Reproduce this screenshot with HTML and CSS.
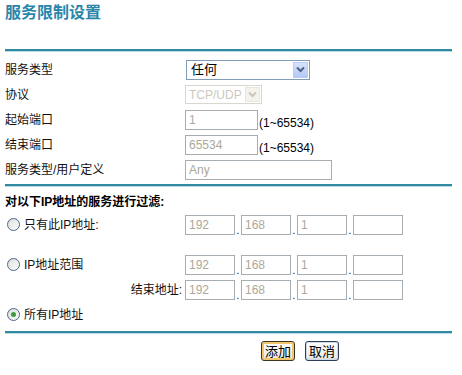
FILE: index.html
```html
<!DOCTYPE html>
<html lang="zh-CN">
<head>
    <meta charset="UTF-8">
    <title>服务限制设置</title>
    <link rel="stylesheet" href="styles.css">
</head>
<body>
<div class="page">
    <h1 class="title">服务限制设置</h1>
    <div class="rule rule-top"></div>

    <!-- 服务设置 -->
    <div class="rows">
        <div class="row">
            <span class="label">服务类型</span>
            <span class="select-box sel-type">
                <select><option>任何</option></select>
                <span class="drop">
                    <svg width="9" height="7" viewBox="0 0 9 7"><path d="M1 1.5 L4.5 5 L8 1.5" fill="none" stroke="#4d6185" stroke-width="2"/></svg>
                </span>
            </span>
        </div>
        <div class="row">
            <span class="label">协议</span>
            <span class="select-box sel-proto disabled">
                <select disabled><option>TCP/UDP</option></select>
                <span class="drop">
                    <svg width="9" height="7" viewBox="0 0 9 7"><path d="M1 1.5 L4.5 5 L8 1.5" fill="none" stroke="#c9c7ba" stroke-width="2"/></svg>
                </span>
            </span>
        </div>
        <div class="row">
            <span class="label">起始端口</span>
            <span class="field"><input class="txt port" type="text" value="1" disabled><span class="hint">(1~65534)</span></span>
        </div>
        <div class="row">
            <span class="label">结束端口</span>
            <span class="field"><input class="txt port" type="text" value="65534" disabled><span class="hint">(1~65534)</span></span>
        </div>
        <div class="row">
            <span class="label">服务类型/用户定义</span>
            <span class="field"><input class="txt custom" type="text" value="Any" disabled></span>
        </div>
    </div>

    <div class="rule rule-mid"></div>

    <!-- IP 过滤 -->
    <div class="section-head">对以下IP地址的服务进行过滤:</div>
    <div class="row">
        <label class="label radio-label"><input type="radio" name="ipmode">只有此IP地址:</label>
        <span class="ip">
            <input class="txt oct" type="text" value="192" disabled><span class="dot">.</span><input class="txt oct" type="text" value="168" disabled><span class="dot">.</span><input class="txt oct" type="text" value="1" disabled><span class="dot">.</span><input class="txt oct" type="text" value="" disabled>
        </span>
    </div>
    <div class="row row-gap">
        <label class="label radio-label"><input type="radio" name="ipmode">IP地址范围</label>
        <span class="ip">
            <input class="txt oct" type="text" value="192" disabled><span class="dot">.</span><input class="txt oct" type="text" value="168" disabled><span class="dot">.</span><input class="txt oct" type="text" value="1" disabled><span class="dot">.</span><input class="txt oct" type="text" value="" disabled>
        </span>
    </div>
    <div class="row">
        <span class="label label-right">结束地址:</span>
        <span class="ip">
            <input class="txt oct" type="text" value="192" disabled><span class="dot">.</span><input class="txt oct" type="text" value="168" disabled><span class="dot">.</span><input class="txt oct" type="text" value="1" disabled><span class="dot">.</span><input class="txt oct" type="text" value="" disabled>
        </span>
    </div>
    <div class="row">
        <label class="label radio-label"><input type="radio" name="ipmode" checked>所有IP地址</label>
    </div>

    <div class="rule rule-bottom"></div>

    <div class="actions">
        <button class="btn btn-default">添加</button>
        <button class="btn">取消</button>
    </div>
</div>
</body>
</html>
```

FILE: styles.css
```css
body {
    margin: 0;
    background: #fff;
    color: #000;
    font-family: "Liberation Sans", "Noto Sans CJK SC", sans-serif;
    font-size: 12px;
}
.page {
    width: 447px;
    padding: 3px 0 0 5px;
}
.title {
    margin: 0 0 26px;
    font-size: 16px;
    line-height: 20px;
    font-weight: bold;
    color: #2a86a8;
}
.rule {
    height: 2px;
    background: #2f8aa2;
    box-shadow: 0 1px 0 #b9dbe4;
}
.rule-top { margin-bottom: 6px; }
.rule-mid { margin-top: 2px; }
.rule-bottom { margin-top: 4px; }

.row {
    display: grid;
    grid-template-columns: 180px auto;
    align-items: center;
    height: 25px;
}
.row-gap { margin-top: 15px; }
.label {
    line-height: 16px;
    white-space: nowrap;
    color: #111;
}
.label-right {
    text-align: right;
    padding-right: 3px;
}
.field {
    display: flex;
    align-items: flex-end;
}
.hint {
    font-size: 12px;
    line-height: 14px;
    margin-left: 1px;
}

/* 下拉框 (XP 风格) */
.select-box {
    position: relative;
    display: inline-block;
    height: 20px;
}
.select-box select {
    -webkit-appearance: none;
    appearance: none;
    width: 100%;
    height: 100%;
    margin: 0;
    padding: 0 0 0 4px;
    border: 1px solid #7f9db9;
    border-radius: 0;
    background: #fff;
    color: #000;
    font-family: "Liberation Sans", "Noto Sans CJK SC", sans-serif;
    font-size: 13px;
}
.sel-type {
    width: 124px;
    margin-left: 1px;
}
.sel-proto {
    width: 77px;
    height: 19px;
}
.sel-proto select {
    padding-left: 3px;
    border-color: #c9c7ba;
    color: #b5b2a4;
    font-size: 12px;
}
.drop {
    position: absolute;
    top: 2px;
    right: 2px;
    bottom: 2px;
    width: 15px;
    display: flex;
    align-items: center;
    justify-content: center;
    background: linear-gradient(#d6e3fd, #b3c8f5);
    border: 1px solid #b7cbf4;
    box-sizing: border-box;
    pointer-events: none;
}
.disabled .drop {
    background: #f4f3ee;
    border-color: #e8e6da;
}

/* 文本框 */
.txt {
    box-sizing: border-box;
    height: 20px;
    margin: 0;
    padding: 0 3px;
    border: 1px solid #a5acb2;
    background: #fff;
    color: #aca899;
    font-family: "Liberation Sans", sans-serif;
    font-size: 12px;
}
.port { width: 73px; }
.custom { width: 147px; }

.section-head {
    margin-top: 6px;
    height: 20px;
    line-height: 20px;
    font-weight: bold;
}

.ip {
    display: flex;
    align-items: flex-end;
}
.oct { width: 50px; }
.dot {
    width: 6px;
    text-align: center;
    font-size: 10px;
    line-height: 8px;
}

/* 单选按钮 */
.radio-label {
    display: flex;
    align-items: center;
}
.radio-label input {
    -webkit-appearance: none;
    appearance: none;
    width: 13px;
    height: 13px;
    margin: 0 4px 0 2px;
    border: 1px solid #4a6785;
    border-radius: 50%;
    background: linear-gradient(135deg, #dcdcd7, #fff);
    position: relative;
}
.radio-label input:checked::after {
    content: "";
    position: absolute;
    left: 3px;
    top: 3px;
    width: 5px;
    height: 5px;
    border-radius: 50%;
    background: #3d9a3d;
}

/* 按钮 */
.actions {
    display: flex;
    gap: 10px;
    padding: 8px 0 0 256px;
}
.btn {
    height: 20px;
    padding: 0 3px;
    border: 1px solid #2c3d5a;
    border-radius: 3px;
    background: linear-gradient(#fff, #ecebe6 85%, #d6d0c5);
    box-shadow: inset 0 0 0 1px #cfd9e8;
    font-family: "Noto Sans CJK SC", sans-serif;
    font-size: 13px;
    line-height: 16px;
    color: #000;
}
.btn-default {
    border-color: #3b3320;
    box-shadow: inset 0 0 0 2px #f2c66c;
}
```
